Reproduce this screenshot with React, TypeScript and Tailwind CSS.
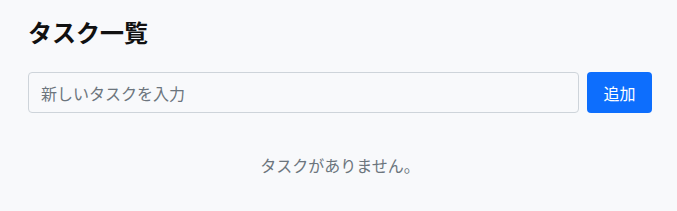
import React, { useState } from "react";

export default function App() {
    const [tasks, setTasks] = useState<string[]>([]);
    const [draft, setDraft] = useState("");

    const addTask = () => {
        const value = draft.trim();
        if (!value) return;
        setTasks((prev) => [...prev, value]);
        setDraft("");
    };

    return (
        <div
            className="min-h-screen bg-[#f8f9fb] text-[#212529]"
            style={{ fontFamily: '"Noto Sans CJK JP", "Noto Sans", sans-serif' }}
        >
            <div className="pl-7 pr-[25px] pt-[17px]">
                <h1 className="text-[24px] leading-[29px] font-bold text-[#111]">タスク一覧</h1>

                <div className="mt-[26px] flex gap-2">
                    <input
                        value={draft}
                        onChange={(e) => setDraft(e.target.value)}
                        onKeyDown={(e) => e.key === "Enter" && addTask()}
                        placeholder="新しいタスクを入力"
                        className="h-[41px] flex-1 rounded-[4px] border border-[#ced4da] bg-[#f8f9fb] px-3 text-[16px] outline-none placeholder:text-[#6c757d]"
                    />
                    <button
                        onClick={addTask}
                        className="h-[41px] w-[65px] rounded-[4px] bg-[#0d6efd] text-[16px] text-white"
                    >
                        追加
                    </button>
                </div>

                {tasks.length > 0 ? (
                    <ul className="mt-6 space-y-2">
                        {tasks.map((task, i) => (
                            <li key={i} className="rounded-[4px] border border-[#dee2e6] bg-white px-3 py-2 text-[16px]">
                                {task}
                            </li>
                        ))}
                    </ul>
                ) : (
                    <p className="mt-10 text-center text-[16px] leading-6 text-[#6c757d]">タスクがありません。</p>
                )}
            </div>
        </div>
    );
}
